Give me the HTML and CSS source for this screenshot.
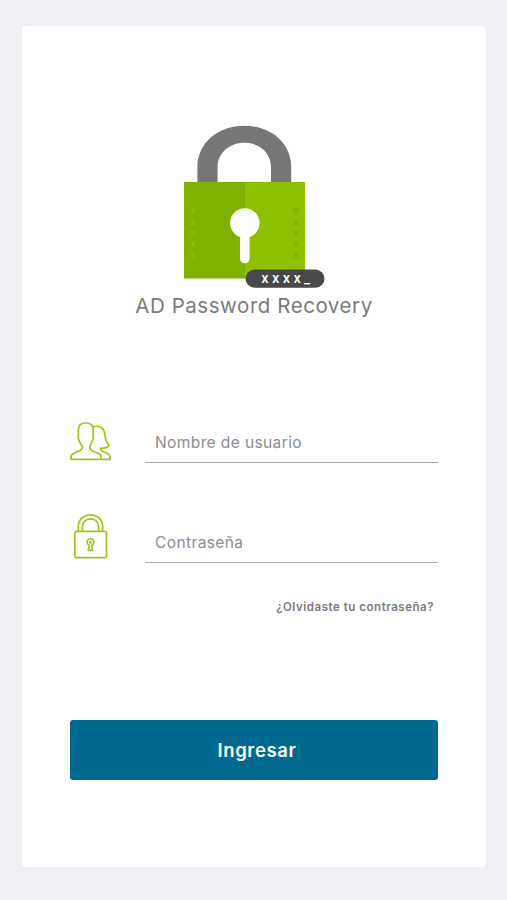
FILE: index.html
```html
<!DOCTYPE html>
<html lang="es">
<head>
<meta charset="utf-8">
<title>AD Password Recovery</title>
<link rel="stylesheet" href="styles.css">
</head>
<body>
<main class="card">
  <header class="brand">
    <svg class="logo" width="142" height="165" viewBox="0 0 142 165" aria-hidden="true">
      <path fill="#777" d="M13.400 60V42C13.400 18 34 .8 60.400 .8S107.200 18 107.200 42V60H87V42C87 28 75 17.800 60.400 17.800S33.600 28 33.600 42V60Z"/>
      <path fill="#7fb000" d="M0 57H61V153.500H0Z"/>
      <path fill="#8fc000" d="M61 57H121V153.500H61Z"/>
      <g class="dots left">
        <text x="6" y="89">x</text><text x="6" y="100">x</text><text x="6" y="111">x</text><text x="6" y="122">x</text><text x="6" y="133">x</text>
      </g>
      <g class="dots right">
        <text x="109" y="89">x</text><text x="109" y="100">x</text><text x="109" y="111">x</text><text x="109" y="122">x</text><text x="109" y="133">x</text>
      </g>
      <circle cx="60.800" cy="98" r="14.700" fill="#fff"/>
      <rect x="56" y="106" width="9.600" height="32.300" rx="4.800" fill="#fff"/>
      <rect x="61.500" y="144.500" width="79" height="18.300" rx="9.150" fill="#484848"/>
      <text class="mask" x="77.300 88 98.700 109.400 120" y="157.800">xxxx_</text>
    </svg>
    <h1 class="title">AD Password Recovery</h1>
  </header>
  <form class="form">
    <label class="field">
      <svg class="icon" width="42" height="40" viewBox="0 0 42 40" aria-hidden="true">
        <path d="M1 38.300V36.500C1 34.500 2 33 4.500 32L9.500 29.700C12 28.500 13 27 12.200 25.200L9.300 20.500C8 18 8 16 8.400 14V8.500C8.400 4.500 11 2 15.800 2S23.200 4.500 23.200 8.500V14C23.700 17 23.200 19 21.600 21.500L20 25C19.200 27 20 28.500 22 29.700L27.500 32C30 33 31.200 34.500 31.200 36.500V38.300Z"/>
        <path d="M23.200 5.800C30 4 34 7 34.700 13C35 19 37 21.500 38.600 24C39.200 26 36 27.300 30.500 27.300C30.500 29 31.500 30 34 31C38 32.300 40 34 40 36V38.300H31.200"/>
      </svg>
      <input class="input" type="text" placeholder="Nombre de usuario">
    </label>
    <label class="field">
      <svg class="icon" width="42" height="46" viewBox="0 0 42 46" aria-hidden="true">
        <rect x="4.800" y="18.300" width="31.700" height="26.300" rx="2"/>
        <path d="M8.300 18V14C8.300 6.500 13.500 1.800 20.500 1.800S32.700 6.500 32.700 14V18M12.400 18V14.200C12.400 9 15.800 5.800 20.500 5.800S28.600 9 28.600 14.200V18"/>
        <path d="M19.100 32.200A3.400 3.400 0 1 1 21.900 32.200V34L22.700 37.300H18.300L19.100 34Z"/>
        <circle cx="20.500" cy="29.200" r=".7"/>
      </svg>
      <input class="input" type="password" placeholder="Contraseña">
    </label>
    <a class="forgot">¿Olvidaste tu contraseña?</a>
    <button class="submit" type="button">Ingresar</button>
  </form>
</main>
</body>
</html>
```
FILE: styles.css
```css
* {
  box-sizing: border-box;
}

body {
  margin: 0;
  height: 900px;
  padding: 26px 21px 33px 22px;
  background: #edeff3;
  font-family: Inter, "Liberation Sans", sans-serif;
  color: #7a7a7a;
}

.card {
  height: 841px;
  padding: 99px 48px 0;
  background: #fff;
  border-radius: 3px;
}

.brand {
  display: flex;
  flex-direction: column;
  align-items: center;
}

.logo {
  display: block;
  margin-left: 2px;
}

.title {
  margin: 1px 0 0;
  font-size: 20.500px;
  font-weight: 400;
  line-height: 30px;
  letter-spacing: 0.550px;
  white-space: nowrap;
}

.dots {
  font-size: 10px;
  font-weight: 700;
}

.left {
  fill: #8aba12;
}

.right {
  fill: #82b000;
}

.mask {
  fill: #fff;
  font-size: 13px;
  font-weight: 600;
}

.form {
  display: flex;
  flex-direction: column;
  padding-top: 99px;
}

.field {
  display: flex;
  height: 43px;
  margin-bottom: 57px;
}

.icon {
  flex: none;
  margin: 1px 33px 0 0;
  fill: none;
  stroke: #9fc51c;
  stroke-width: 1.700;
  stroke-linejoin: round;
}

.field + .field .icon {
  margin-top: -7px;
}

.input {
  flex: 1;
  min-width: 0;
  height: 43px;
  padding: 2px 10px 0;
  border: 0;
  border-bottom: 1px solid #aaa;
  outline: 0;
  background: transparent;
  font-family: inherit;
  font-size: 15.500px;
  letter-spacing: 0.400px;
}

.input::placeholder {
  color: #8c8c8c;
  opacity: 1;
}

.forgot {
  align-self: flex-end;
  margin: -21px 4px 0 0;
  font-size: 11.500px;
  font-weight: 600;
  line-height: 16px;
  letter-spacing: 0.530px;
}

.submit {
  height: 60px;
  margin-top: 105px;
  padding: 0 0 0 6px;
  border: 0;
  border-radius: 3px;
  background: #006990;
  color: #fff;
  font-family: inherit;
  font-size: 18.500px;
  font-weight: 600;
  letter-spacing: 0.650px;
}
```
